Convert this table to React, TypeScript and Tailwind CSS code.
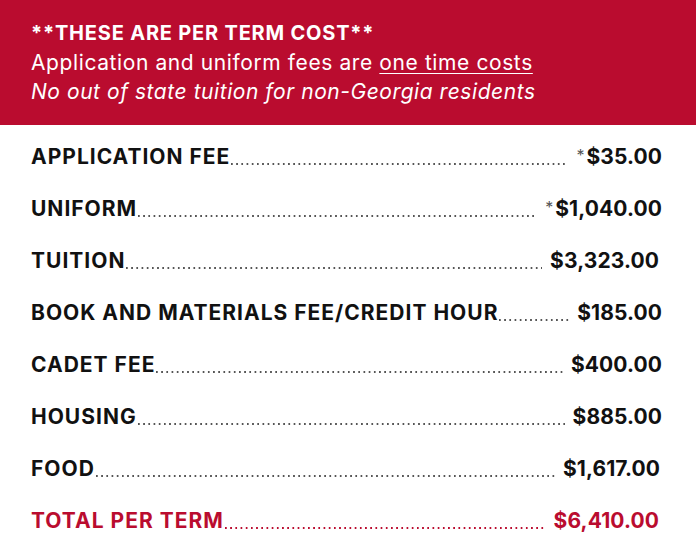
import React from "react";

const rows: { label: string; value: string; star?: boolean; total?: boolean; shift?: string }[] = [
  { label: "APPLICATION FEE", value: "$35.00", star: true },
  { label: "UNIFORM", value: "$1,040.00", star: true },
  { label: "TUITION", value: "$3,323.00", shift: "mr-[3px]" },
  { label: "BOOK AND MATERIALS FEE/CREDIT HOUR", value: "$185.00" },
  { label: "CADET FEE", value: "$400.00" },
  { label: "HOUSING", value: "$885.00" },
  { label: "FOOD", value: "$1,617.00", shift: "mr-[2px]" },
  { label: "TOTAL PER TERM", value: "$6,410.00", total: true, shift: "mr-[3px]" },
];

export default function App() {
  return (
    <div className="w-[696px] h-[540px] overflow-hidden bg-white" style={{ fontFamily: "Inter, 'Noto Sans', sans-serif" }}>
      <div className="bg-[#ba0c2f] h-[125px] pl-[31px] pt-[19px] text-white text-[21px] leading-[29px] tracking-[0.6px]">
        <div className="font-bold text-[20px] tracking-[0.8px]">**THESE ARE PER TERM COST**</div>
        <div>
          Application and uniform fees are{" "}
          <span className="underline underline-offset-[3px] decoration-[1px]">one time costs</span>
        </div>
        <div className="italic tracking-[0.55px]">No out of state tuition for non-Georgia residents</div>
      </div>
      <div className="pt-[6px] pl-[31px] pr-[34px]">
        {rows.map((r) => (
          <div
            key={r.label}
            className={`h-[52px] leading-[52px] flex whitespace-nowrap ${r.total ? "text-[#ba0c2f]" : "text-[#111]"}`}
          >
            <span className="font-bold text-[21px] tracking-[1px]">{r.label}</span>
            <span
              className={`flex-1 h-[2px] self-end mb-[18px] ml-[1px] mr-[8px] bg-repeat-x bg-[length:5.2px_2px] ${
                r.total
                  ? "bg-[linear-gradient(to_right,#ba0c2f_2px,transparent_2px)]"
                  : "bg-[linear-gradient(to_right,#555_2px,transparent_2px)]"
              }`}
            />
            {r.star && <span className="text-[16px] leading-[16px] text-[#555] self-start mt-[16px] mr-[2px]">*</span>}
            <span className={`font-bold text-[21px] tracking-[0.1px] ${r.shift ?? ""}`}>{r.value}</span>
          </div>
        ))}
      </div>
    </div>
  );
}
